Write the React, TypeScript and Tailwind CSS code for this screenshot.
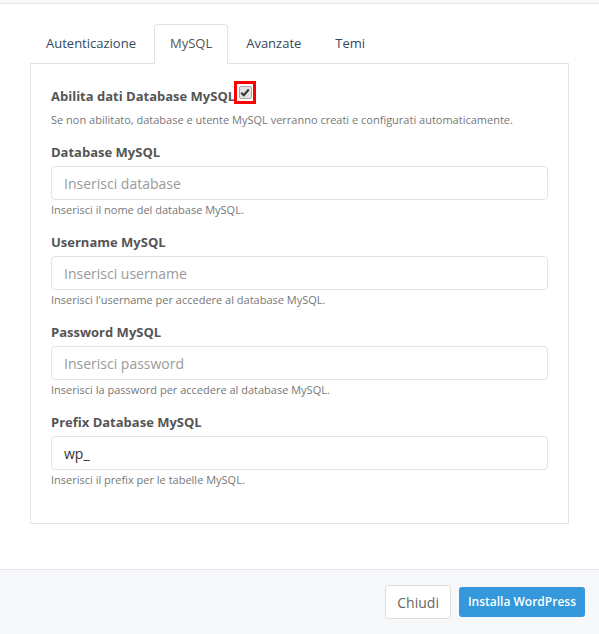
import { useState } from "react";

const FIELDS = [
  {
    label: "Database MySQL",
    placeholder: "Inserisci database",
    value: "",
    help: "Inserisci il nome del database MySQL.",
  },
  {
    label: "Username MySQL",
    placeholder: "Inserisci username",
    value: "",
    help: "Inserisci l'username per accedere al database MySQL.",
  },
  {
    label: "Password MySQL",
    placeholder: "Inserisci password",
    value: "",
    help: "Inserisci la password per accedere al database MySQL.",
  },
  {
    label: "Prefix Database MySQL",
    placeholder: "",
    value: "wp_",
    help: "Inserisci il prefix per le tabelle MySQL.",
  },
];

const TABS = ["Autenticazione", "MySQL", "Avanzate", "Temi"];

export default function App() {
  const [active, setActive] = useState("MySQL");
  const [enabled, setEnabled] = useState(true);
  const [values, setValues] = useState(FIELDS.map((f) => f.value));

  return (
    <div
      className="w-[599px] h-[634px] bg-white flex flex-col"
      style={{ fontFamily: '"Open Sans", sans-serif' }}
    >
      <div className="h-[4px] bg-[#f7f8fa] border-b border-[#e6e7ea]" />

      <div className="flex-1 px-[30px] pt-[20px]">
        <div className="flex h-[40px] border-b border-[#e3e3e3]">
          {TABS.map((t) => (
            <button
              key={t}
              onClick={() => setActive(t)}
              className={
                t === active
                  ? "px-[15px] mr-[2px] mb-[-1px] h-[40px] text-[13px] text-[#555] bg-white border border-[#e3e3e3] border-b-white rounded-t-[4px]"
                  : "px-[15px] mr-[2px] h-[40px] text-[13px] text-[#34495e] border border-transparent"
              }
            >
              {t}
            </button>
          ))}
        </div>

        <div className="border border-t-0 border-[#e3e3e3] px-[20px] pt-[23px] pb-[36px]">
          <div className="flex items-start h-[18px] text-[13px] font-bold text-[#555] leading-[18px]">
            <span className="shrink-0">Abilita dati Database MySQL</span>
            <span className="shrink-0 -ml-[1px] -mt-[6px] w-[22px] h-[23px] border-[3px] border-[#ff0000] flex items-center justify-center bg-white">
              <button
                onClick={() => setEnabled(!enabled)}
                className="w-[13px] h-[13px] rounded-[2px] border border-[#a9a9a9] bg-[#e4e4e4] flex items-center justify-center"
              >
                {enabled && (
                  <svg width="10" height="9" viewBox="0 0 10 9">
                    <path
                      d="M1.2 4.8 L3.8 7.2 L8.8 1.5"
                      fill="none"
                      stroke="#333"
                      strokeWidth="2"
                    />
                  </svg>
                )}
              </button>
            </span>
          </div>
          <p className="mt-[7px] text-[11px] leading-[15px] text-[#777]">
            Se non abilitato, database e utente MySQL verranno creati e
            configurati automaticamente.
          </p>

          {FIELDS.map((f, i) => (
            <div key={f.label} className="mt-[16px]">
              <label className="block text-[13px] leading-[18px] font-bold text-[#555]">
                {f.label}
              </label>
              <input
                type={i === 2 ? "password" : "text"}
                placeholder={f.placeholder}
                value={values[i]}
                onChange={(e) => {
                  const next = [...values];
                  next[i] = e.target.value;
                  setValues(next);
                }}
                className="mt-[5px] block w-full h-[34px] pl-[12px] pr-[12px] rounded-[4px] border border-[#e3e3e3] text-[14px] text-[#333] placeholder:text-[#9a9a9a] outline-none"
              />
              <p className="mt-[2px] text-[11px] leading-[15px] text-[#777]">
                {f.help}
              </p>
            </div>
          ))}
        </div>
      </div>

      <div className="h-[65px] bg-[#f7f8fa] border-t border-[#e6e7ea] flex items-center justify-end gap-[8px] pr-[14px]">
        <button className="h-[34px] px-[11px] bg-white border border-[#dddddd] rounded-[3px] text-[14px] text-[#666]">
          Chiudi
        </button>
        <button className="h-[30px] px-[9px] bg-[#3498db] rounded-[3px] text-[12px] font-semibold text-white">
          Installa WordPress
        </button>
      </div>
    </div>
  );
}
